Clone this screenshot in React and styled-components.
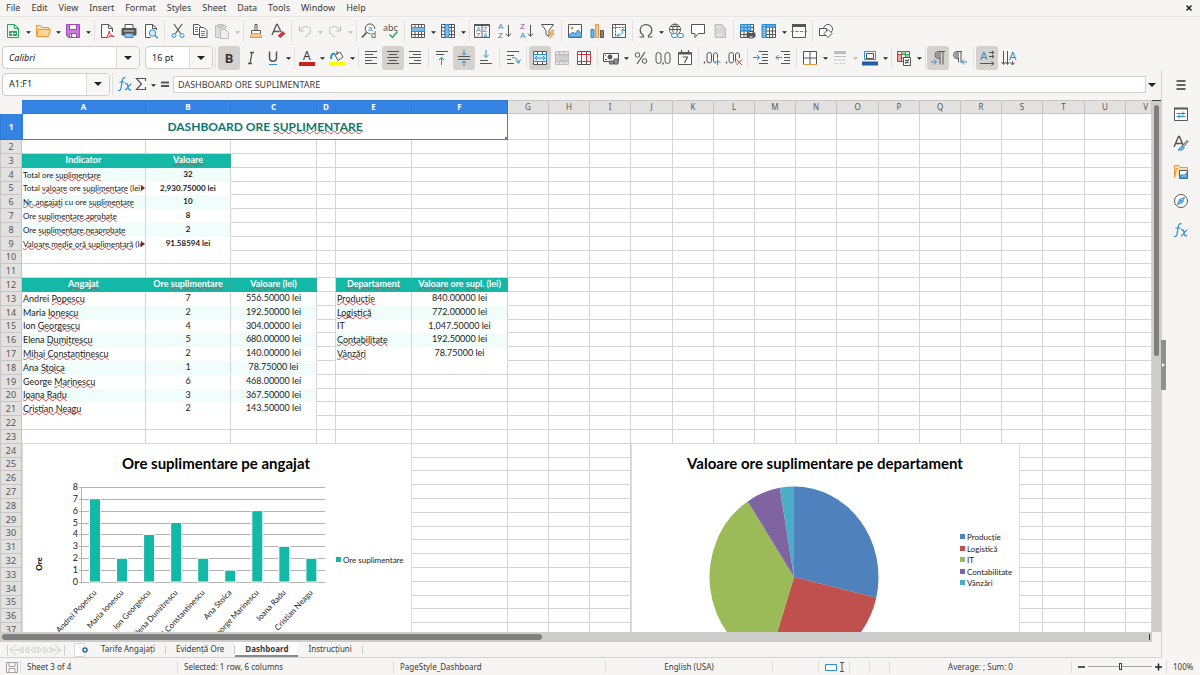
import React from "react";
import styled, { createGlobalStyle, css } from "styled-components";

const UI = '"Noto Sans", "Open Sans", sans-serif';
const SHEET = 'Lato, "Noto Sans", sans-serif';

const K = "#565656";
const B = "#2a8fd4";
const G = "#2fa35a";
const P = "#a347ba";
const R = "#d8343c";
const O = "#e8973a";
const D = "#bdbdbd";

const Global = createGlobalStyle`
  *, *::before, *::after { box-sizing: border-box; }
  html, body, #root { height: 100%; }
  body { margin: 0; background: #f6f5f3; color: #3a3a3a; font: 9px/12px ${UI}; overflow: hidden; }
  button, input, select { font: inherit; color: inherit; margin: 0; }
  svg { overflow: visible; }
`;

/* ---------- shell ---------- */

const App_ = styled.div`
  display: flex;
  flex-direction: column;
  height: 100vh;
  background: #f6f5f3;
`;

const MenuBar = styled.nav`
  display: flex;
  align-items: center;
  gap: 11px;
  height: 17px;
  padding: 0 6px;
  border-bottom: 1px solid #e6e5e3;
`;

const MenuItem = styled.button`
  padding: 0;
  border: 0;
  background: none;
  line-height: 16px;
`;

const CloseButton = styled(MenuItem)`
  display: flex;
  margin-left: auto;
`;

const Toolbar = styled.div`
  display: flex;
  align-items: center;
  height: ${(p) => p.$h}px;
  padding-left: ${(p) => p.$pad}px;
`;

const Sep = styled.span`
  flex: none;
  width: ${(p) => (p.$tight ? 4 : 5)}px;
  height: 22px;
  background: linear-gradient(#e3e1df, #e3e1df) center / 1px 100% no-repeat;
`;

const ToolButton = styled.button`
  display: flex;
  flex: none;
  align-items: center;
  justify-content: center;
  width: 22px;
  height: 24px;
  padding: 0;
  border: 0;
  border-radius: 3px;
  background: ${(p) => (p.$on ? "#d5d1cd" : "none")};
`;

const Split = styled.span`
  display: flex;
  flex: none;
  align-items: center;
`;

const DropButton = styled.button`
  display: flex;
  align-items: center;
  justify-content: center;
  width: 8px;
  height: 24px;
  padding: 2px 0 0;
  border: 0;
  background: none;
`;

const Combo = styled.span`
  display: inline-grid;
  flex: none;
  width: ${(p) => p.$w}px;
  height: 23px;
  border: 1px solid #cfccc9;
  border-radius: 4px;
  background: #fff;
  overflow: hidden;
`;

const ComboField = styled.select`
  grid-area: 1 / 1;
  appearance: none;
  width: 100%;
  padding: 0 24px 0 6px;
  border: 0;
  background: none;
  color: #222;
  font-style: ${(p) => (p.$italic ? "italic" : "normal")};
`;

const ComboArrow = styled.span`
  grid-area: 1 / 1;
  justify-self: end;
  display: flex;
  align-items: center;
  justify-content: center;
  width: 23px;
  border-left: 1px solid #dedbd8;
  background: #f8f7f6;
  pointer-events: none;
`;

const Gap = styled.span`
  flex: none;
  width: ${(p) => p.$w}px;
`;

const Body = styled.div`
  display: flex;
  flex: 1 1 0;
  min-height: 0;
`;

const Main = styled.main`
  display: flex;
  flex: 1 1 0;
  flex-direction: column;
  min-width: 0;
`;

const FormulaBar = styled.div`
  display: flex;
  align-items: center;
  height: 30px;
  padding: 0 5px 2px 2px;
`;

const FormulaInput = styled.input`
  flex: 1 1 0;
  min-width: 0;
  height: 17px;
  margin-right: 2px;
  padding: 0 4px;
  border: 1px solid #d4d2d0;
  background: #fff;
`;

const GridRow = styled.div`
  display: flex;
  flex: 1 1 0;
  min-height: 0;
`;

const SheetView = styled.div`
  position: relative;
  flex: 1 1 0;
  min-width: 0;
  overflow: hidden;
  background: #fff;
  font-family: ${SHEET};
`;

const VTrack = styled.div`
  flex: none;
  width: 9px;
  padding: 4px 2px;
  border-top: 1px solid #444;
  background: #cdcdcb;
`;

const VThumb = styled.div`
  height: 48%;
  border-radius: 3px;
  background: #7f7f7e;
`;

const HTrack = styled.div`
  display: flex;
  flex: none;
  align-items: center;
  justify-content: space-between;
  height: 10px;
  margin-right: 9px;
  padding: 2px;
  background: #cdcdcb;
`;

const HThumb = styled.div`
  width: 47%;
  height: 6px;
  border-radius: 3px;
  background: #7f7f7e;
`;

const HEnd = styled.div`
  width: 1px;
  height: 6px;
  background: #333;
`;

/* ---------- sheet ---------- */

const Grid = styled.table`
  width: 100%;
  table-layout: fixed;
  border-collapse: separate;
  border-spacing: 0;
  line-height: 12px;
`;

const Row = styled.tr`
  height: ${(p) => p.$h}px;
`;

const ColHead = styled.th`
  height: 14px;
  padding: ${(p) => (p.$last ? "0 3px 0 0" : "0")};
  border: solid ${(p) => (p.$on ? "#3079d6" : "#c6c5c3")};
  border-width: 1px 1px 1px 0;
  background: ${(p) => (p.$on ? "#3584e4" : "#e2e1df")};
  color: ${(p) => (p.$on ? "#fff" : "#555")};
  font: ${(p) => (p.$on ? 700 : 400)} 8px/12px ${UI};
  text-align: ${(p) => (p.$last ? "right" : "center")};
`;

const Corner = styled.td`
  padding: 0;
  background: #f6f5f3;
`;

const RowHead = styled.th`
  padding: 0;
  border: solid ${(p) => (p.$on ? "#3079d6" : "#c6c5c3")};
  border-width: 0 1px 1px;
  background: ${(p) => (p.$on ? "#3584e4" : "#e2e1df")};
  color: ${(p) => (p.$on ? "#fff" : "#555")};
  font: ${(p) => (p.$on ? 700 : 400)} 9px/12px ${UI};
`;

const Cell = styled.td`
  position: relative;
  padding: 0;
  border: solid #d4d4d4;
  border-width: 0 1px 1px 0;
  overflow: hidden;
  white-space: nowrap;
  color: #1c1c1c;
  font-size: ${(p) => (p.$small ? 8 : 9)}px;
  ${(p) =>
    p.$kind === "head" &&
    css`
      border-color: #35a99c;
      background: #14b8a6;
      color: #fff;
      font-weight: 700;
      text-align: center;
      vertical-align: top;
    `}
  ${(p) =>
    p.$kind === "label" &&
    css`
      padding-left: 1px;
      vertical-align: bottom;
    `}
  ${(p) =>
    p.$kind === "value" &&
    css`
      font-weight: ${p.$small ? 700 : 400};
      text-align: center;
      vertical-align: top;
    `}
  ${(p) => p.$kind && p.$kind !== "head" && `border-bottom-color: ${p.$band ? "#f0fdfa" : "#fff"};`}
  ${(p) => p.$band && "background: #f0fdfa;"}
`;

const TitleCell = styled.td`
  position: relative;
  padding: 0;
  border: 1px solid #3584e4;
  border-top: 0;
  color: #0f766e;
  font-size: 12px;
  font-weight: 700;
  line-height: 20px;
  text-align: center;
`;

const FillHandle = styled.span`
  position: absolute;
  right: -1px;
  bottom: -1px;
  width: 3px;
  height: 3px;
  background: #3584e4;
`;

const Misspelled = styled.span`
  text-decoration: underline wavy #e23b3b 1px;
  text-decoration-skip-ink: none;
  text-underline-offset: -1px;
`;

const MoreMark = styled.span`
  position: absolute;
  right: 0;
  top: 0;
  display: flex;
  align-items: center;
  height: 100%;
  background: #fff;
  &::after {
    content: "";
    border: solid transparent;
    border-width: 3px 0 3px 4px;
    border-left-color: #8a1822;
  }
`;

const ChartFrame = styled.figure`
  position: absolute;
  top: 343px;
  left: ${(p) => p.$x}px;
  margin: 0;
  border: 1px solid #dcdcdc;
  background: #fff;
`;

const ChartSvg = styled.svg`
  display: block;
  font-family: ${SHEET};
`;

/* ---------- side bar, tabs, status ---------- */

const SideBar = styled.aside`
  position: relative;
  display: flex;
  flex: none;
  flex-direction: column;
  align-items: center;
  gap: 5px;
  width: 39px;
  padding-top: 3px;
  border-left: 1px solid #d3d1cf;
`;

const SideHandle = styled.button`
  position: absolute;
  left: -1px;
  top: 46%;
  display: flex;
  align-items: center;
  width: 5px;
  height: 50px;
  padding: 0;
  border: 0;
  background: #8f8f8e;
`;

const TabBar = styled.div`
  display: flex;
  flex: none;
  align-items: center;
  height: 16px;
  padding-left: 5px;
  border-bottom: 1px solid #d3d1cf;
  font-size: 8px;
`;

const Tab = styled.button`
  height: 15px;
  padding: 0 10px;
  border: 0;
  border-bottom: 2px solid ${(p) => (p.$on ? "#8b8b8a" : "transparent")};
  background: ${(p) => (p.$on ? "#fff" : "none")};
  font-weight: ${(p) => (p.$on ? 700 : 400)};
  line-height: 13px;
`;

const TabSep = styled.span`
  width: 1px;
  height: 8px;
  background: #c9c7c5;
`;

const NavButton = styled.button`
  display: flex;
  flex: none;
  padding: 0;
  border: 0;
  background: none;
`;

const StatusBar = styled.footer`
  display: grid;
  flex: none;
  grid-template-columns: 21px 157px 216fr 212fr 167fr 46px 31px 20px 20px 182fr 95px 33px;
  align-items: center;
  height: 17px;
  font-size: 8px;
`;

const StatusItem = styled.span`
  display: flex;
  align-items: center;
  justify-content: ${(p) => (p.$center ? "center" : "flex-start")};
  height: 12px;
  padding-left: ${(p) => (p.$center ? 0 : 6)}px;
  border-right: ${(p) => (p.$plain ? 0 : 1)}px solid #e0dedc;
  white-space: nowrap;
`;

const ZoomSlider = styled.input`
  appearance: none;
  width: 64px;
  height: 9px;
  margin: 0 3px;
  background: linear-gradient(#a5a4a3, #a5a4a3) center / 100% 1px no-repeat;
  &::-webkit-slider-thumb {
    appearance: none;
    width: 3px;
    height: 7px;
    border: 1px solid #444;
    background: #f6f5f3;
  }
`;

/* ---------- icons ---------- */

const Svg = ({ children, w = 16, h = 16 }) => (
  <svg width={w} height={h} viewBox={`0 0 ${w} ${h}`} fill="none" stroke={K} strokeWidth="1" aria-hidden="true">
    {children}
  </svg>
);

const Arrow = ({ big, dim }) => (
  <svg width={big ? 8 : 5} height={big ? 4 : 3} viewBox="0 0 8 4" aria-hidden="true">
    <path d="M0 0h8L4 4z" fill={dim ? "#b9b9b9" : "#222"} />
  </svg>
);

const glyph = (text, x, y, size, fill, extra = {}) => (
  <text x={x} y={y} fontSize={size} fill={fill} stroke="none" fontFamily="Liberation Sans, sans-serif" {...extra}>
    {text}
  </text>
);

const lines = (ys, x1, x2) => ys.map((y, i) => <path key={y} d={`M${Array.isArray(x1) ? x1[i] : x1} ${y}H${Array.isArray(x2) ? x2[i] : x2}`} />);

const gridPath = "M1.5 1.5h13v13h-13zM1.5 4.5h13M1.5 8h13M1.5 11.5h13M5 1.5v13M8.5 1.5v13M11.5 1.5v13";

const ICONS = {
  new: (
    <Svg>
      <path d="M2.5 1.5h7l4 4v9h-11z" fill="#e9f7ee" stroke={G} />
      <path d="M9.5 1.5v4h4" stroke={G} />
      <path d="M4.500 8.500h7v4h-7z" fill={G} stroke={G} />
      <path d="M5 10.500h6M7.500 9v4" stroke="#d8f1e0" />
    </Svg>
  ),
  open: (
    <Svg>
      <path d="M1.500 13.500v-11h4l1.500 2h6.500v2" fill="#fbe0b4" stroke={O} />
      <path d="M1.500 13.500l2-7h12l-2 7z" fill="#fbd596" stroke={O} />
    </Svg>
  ),
  save: (
    <Svg>
      <path d="M1.500 1.500h13v13h-11l-2-2z" fill="#c77ad8" stroke={P} />
      <path d="M4.500 1.500h7v5h-7z" fill="#fff" stroke={P} />
      <path d="M4.500 14.500v-4h7v4z" fill="#fff" stroke={P} />
      <path d="M6.500 11v3" stroke={P} strokeWidth="1.500" />
    </Svg>
  ),
  pdf: (
    <Svg>
      <path d="M13.500 9V5l-4-3.500h-7v13h6M9.500 1.500v4h4" fill="#fff" />
      <path d="M10 8c0 3-1.500 5-3 7M10 8c.5 3 2 5 5 5.500-3-.8-5-.2-7.500 1.200" stroke={R} />
    </Svg>
  ),
  print: (
    <Svg>
      <path d="M4 1.500h8v4h-8z" fill="#fff" />
      <path d="M1 5.500h14v6.500H1z" fill={K} />
      <path d="M3 8h10" stroke="#ddd" />
      <path d="M4 10.500h8v4h-8z" fill="#8fc6ec" stroke={B} />
    </Svg>
  ),
  preview: (
    <Svg>
      <path d="M13.500 7V5l-4-3.500h-7v13h5M9.500 1.500v4h4" fill="#fff" />
      <circle cx="9.500" cy="10" r="3.200" fill="#d3eafa" stroke={B} />
      <path d="M11.800 12.300l3 3" stroke={B} strokeWidth="1.300" />
    </Svg>
  ),
  cut: (
    <Svg>
      <path d="M4 1l6.500 9.500M12 1L5.500 10.500" strokeWidth="1.200" />
      <circle cx="4" cy="12.500" r="2" stroke={B} />
      <circle cx="12" cy="12.500" r="2" stroke={B} />
    </Svg>
  ),
  copy: (
    <Svg>
      <path d="M8 11.500H1.500v-10h5l3 3" fill="#fff" />
      <path d="M7.500 4.500h4.500l3 3v7H7.500z" fill="#fff" />
      <path d="M3 4.500h3M3 6.500h3M3 8.500h3M9 8.500h4M9 10.500h4M9 12.500h4" stroke={B} />
    </Svg>
  ),
  paste: (
    <Svg>
      <path d="M1.500 2.500h10v12h-10z" fill="#dedede" stroke={D} />
      <path d="M4 1.500h5v3H4z" fill="#ccc" stroke={D} />
      <path d="M6.500 6.500h5l3 3v6h-8z" fill="#eee" stroke={D} />
    </Svg>
  ),
  clone: (
    <Svg>
      <path d="M7 1.500h2v6H7z" fill="#fff" />
      <path d="M3.500 7.500h9v3h-9z" fill="#fff" />
      <path d="M3.500 10.500h9l1 4h-11z" fill="#f9c98a" stroke={O} />
    </Svg>
  ),
  clear: (
    <Svg>
      <path d="M2 12L6.500 1.500h1L11 9M3.500 8.500h6" strokeWidth="1.300" />
      <path d="M7.500 13l5-5 3 2.500-5 4.500z" fill={R} stroke="none" />
    </Svg>
  ),
  undo: (
    <Svg>
      <path d="M2.500 3v5h5M2.500 8C5 4 9 2.500 12 4.500s2 6-4 10" stroke={D} />
    </Svg>
  ),
  redo: (
    <Svg>
      <path d="M13.500 3v5h-5M13.500 8C11 4 7 2.500 4 4.500s-2 6 4 10" stroke={D} />
    </Svg>
  ),
  find: (
    <Svg>
      <path d="M9.500 10.500A4.800 4.800 0 1 1 13.800 6" fill="#fff" />
      <path d="M5.500 9.500L1 14.500" strokeWidth="1.800" />
      {glyph("a", 7, 8, 8, B)}
      {glyph("d", 10, 15, 9, K)}
    </Svg>
  ),
  spell: (
    <Svg>
      {glyph("abc", 0, 8, 9, K, { fontFamily: "Noto Sans" })}
      <path d="M6.500 11.500l3 3 5-6" stroke={G} strokeWidth="1.500" />
    </Svg>
  ),
  row: (
    <Svg>
      <path d={gridPath} fill="#fff" />
      <path d="M1.500 4.500h13v4h-13z" fill="#7db9e6" stroke={B} />
    </Svg>
  ),
  column: (
    <Svg>
      <path d={gridPath} fill="#fff" />
      <path d="M5 1.500h4v13H5z" fill="#7db9e6" stroke={B} />
    </Svg>
  ),
  sort: (
    <Svg>
      <path d="M.5 1.500h15v13H.5z" fill="#fff" />
      <path d="M.5 2h15" strokeWidth="2" />
      <path d="M8 2v13" />
      {glyph("A", 2, 9, 7, B)}
      {glyph("Z", 2, 15, 7, P)}
      {glyph("Z", 9, 9, 7, P)}
      {glyph("A", 9, 15, 7, B)}
    </Svg>
  ),
  sortAsc: (
    <Svg>
      {glyph("A", 2, 6, 8, B)}
      {glyph("Z", 2, 15, 8, P)}
      <path d="M12.500 2v11M10 10.500l2.500 3 2.500-3" />
    </Svg>
  ),
  sortDesc: (
    <Svg>
      {glyph("Z", 2, 6, 8, P)}
      {glyph("A", 2, 15, 8, B)}
      <path d="M12.500 2v11M10 10.500l2.500 3 2.500-3" />
    </Svg>
  ),
  filter: (
    <Svg>
      <path d="M1.500 1.500h12l-4.500 6v6l-3-2v-4z" fill="#fff" />
      <path d="M12 7l-3 4.500h2.500L10 15.500l4.500-5H12L14 7z" fill="#f7b765" stroke={O} strokeWidth=".6" />
    </Svg>
  ),
  image: (
    <Svg>
      <path d="M1.500 1.500h13v13h-13z" fill="#fff" />
      <circle cx="5" cy="5" r="1.500" fill={O} stroke="none" />
      <path d="M2 14v-2l4-3 2 2 3-4 3.500 4v3z" fill="#6fb2e4" stroke={B} />
    </Svg>
  ),
  chart: (
    <Svg>
      <path d="M2 6.500h3v8H2z" fill="#6fb2e4" stroke={B} />
      <path d="M6.500 1.500h3v13h-3z" fill="#fbc886" stroke={O} />
      <path d="M11.500 7.500h3v7h-3z" fill="#888" />
    </Svg>
  ),
  pivot: (
    <Svg>
      <path d="M1.500 1.500h13v13h-13z" fill="#fff" />
      <path d="M1.500 4.500h13M4.500 1.500v13" strokeDasharray="2 1" />
      <path d="M6 12.500c4 0 6-2 6-6M10 8l2-2 2 2M8 10.500l-2 2 2 2" stroke={B} />
    </Svg>
  ),
  omega: (
    <Svg>
      <path d="M1.500 14h4v-1.500C3 11 2.200 9 2.200 7 2.200 4 4.500 1.700 8 1.700S13.800 4 13.800 7c0 2-.8 4-3.300 5.500V14h4" strokeWidth="1.200" />
    </Svg>
  ),
  link: (
    <Svg>
      <circle cx="7" cy="6.500" r="5.500" fill="#fff" />
      <path d="M1.500 6.500h11M7 1c-3 3-3 8 0 11M7 1c3 3 3 8 0 11M2.500 3.500h9" />
      <rect x="3.500" y="10.500" width="6" height="4" rx="2" fill="#f6f5f3" stroke={B} />
      <rect x="9.500" y="10.500" width="6" height="4" rx="2" fill="#f6f5f3" stroke={B} />
    </Svg>
  ),
  comment: (
    <Svg>
      <path d="M1.500 1.500h13v9H8.500l-3.500 4v-4H1.500z" fill="#fff" />
    </Svg>
  ),
  headerFooter: (
    <Svg>
      <path d="M3 1.500h7l3.500 3.500v9.500H3z" fill="#d6d6d6" stroke={D} />
      <path d="M5 4h4M5 12h6" stroke="#efefef" />
    </Svg>
  ),
  printArea: (
    <Svg>
      <path d={gridPath} fill="#fff" />
      <path d="M1.500 1.500h10v6h-10z" fill="#7db9e6" stroke={B} />
      <path d="M1.500 4.500h10M5 1.500v6M8.500 1.500v6" stroke={B} />
      <path d="M8 10h8v4H8z" fill={K} />
      <path d="M10 8.500h4v2h-4zM10 13h4v2h-4z" fill="#fff" />
    </Svg>
  ),
  freeze: (
    <Svg>
      <path d={gridPath} fill="#fff" />
      <path d="M1 1.500h4v13H1zM5 1.500h9.500v3H5z" fill="#56a5de" stroke={B} />
      <path d="M3 0v3M3 5v10" stroke="#fff" strokeDasharray="1 1" />
    </Svg>
  ),
  splitWin: (
    <Svg>
      <path d="M1.500 1.500h13v13h-13z" fill="#fff" />
      <path d="M1 2.500h14" strokeWidth="3" />
      <path d="M0 8.500h16" stroke={B} strokeDasharray="3 1.500" />
    </Svg>
  ),
  shapes: (
    <Svg>
      <circle cx="10" cy="6" r="4.500" fill="#fff" />
      <path d="M1.500 5.500h7v7h-7z" fill="#fff" />
      <path d="M10 6.500l4 4-4 4-4-4z" fill="#fff" />
    </Svg>
  ),
  bold: <Svg>{glyph("B", 4, 13, 13, "#333", { fontWeight: 700, fontFamily: "Roboto" })}</Svg>,
  italic: <Svg><path d="M7 2.500h4M5 13.500h4M9 2.500l-2 11" strokeWidth="1.300" /></Svg>,
  underline: (
    <Svg>
      <path d="M4.500 1.500v6c0 5 7 5 7 0v-6" strokeWidth="1.500" />
      <path d="M4 14.500h8" stroke={B} />
    </Svg>
  ),
  fontColor: (
    <Svg>
      {glyph("A", 4, 10, 12, "#333", { fontFamily: "Noto Sans" })}
      <path d="M0 14h16" stroke="#c9211e" strokeWidth="4" />
    </Svg>
  ),
  highlight: (
    <Svg>
      <path d="M6 5l5-3 3 5-5 3.500z" fill="#fff" />
      <path d="M6 4c-3-1-4 1-4 5" stroke={B} strokeWidth="2" />
      <path d="M8 5V1" />
      <path d="M0 14h16" stroke="#ffff00" strokeWidth="4" />
    </Svg>
  ),
  left: <Svg>{lines([1.5, 4.5, 7.5, 10.5, 13.5], 2, [14, 10, 14, 9, 14])}</Svg>,
  center: <Svg>{lines([1.5, 4.5, 7.5, 10.5, 13.5], [2, 4, 2, 4, 2], [14, 12, 14, 12, 14])}</Svg>,
  right: <Svg>{lines([1.5, 4.5, 7.5, 10.5, 13.5], [2, 6, 2, 7, 2], 14)}</Svg>,
  top: (
    <Svg>
      {lines([1.5, 4.5], [2, 2], [14, 10])}
      <path d="M7.500 15V8M5 10l2.500-2.500L10 10" stroke={B} />
    </Svg>
  ),
  middle: (
    <Svg>
      {lines([6.500, 9.500], [2, 2], [14, 14])}
      <path d="M8 0v5M6 3l2 2 2-2M8 16v-5M6 13l2-2 2 2" stroke={B} />
    </Svg>
  ),
  bottom: (
    <Svg>
      {lines([10.500, 13.500], [2, 2], [10, 14])}
      <path d="M8 0v7M5.500 5L8 7.500 10.500 5" stroke={B} />
    </Svg>
  ),
  wrap: (
    <Svg>
      {lines([1.500, 5.500, 9.500, 13.500], 2, [14, 9, 6, 9])}
      <path d="M7 7.500c4 0 6 1.500 6.500 5M10.500 10.500l3 3 2-4" stroke={B} />
    </Svg>
  ),
  merge: (
    <Svg>
      <path d="M1.500 1.500h13v13h-13zM1.500 4.500h13M1.500 11.500h13M5.500 1.500v3M10.500 1.500v3M5.500 11.500v3M10.500 11.500v3" fill="#fff" />
      <path d="M1.500 4.500h13v7h-13z" fill="#d3eafa" stroke={B} />
      <path d="M3 8h10M5 6L3 8l2 2M11 6l2 2-2 2" stroke={B} />
    </Svg>
  ),
  mergeCells: (
    <Svg>
      <path d="M1.500 1.500h13v13h-13zM1.500 4.500h13M1.500 11.500h13M5.500 1.500v3M10.500 1.500v3M5.500 11.500v3M10.500 11.500v3" fill="#e4e4e4" stroke={D} />
      <path d="M1.500 5h13v6h-13z" fill="#d0d0d0" stroke={D} />
    </Svg>
  ),
  splitCells: (
    <Svg>
      <path d="M1.500 1.500h13v13h-13zM1.500 4.500h13M1.500 11.500h13M5.500 1.500v3M10.500 1.500v3M5.500 11.500v3M10.500 11.500v3" fill="#fff" />
      <path d="M1.500 4.500h13v7h-13zM5.500 4.500v7M10.500 4.500v7" stroke={R} fill="#fff" />
    </Svg>
  ),
  currency: (
    <Svg>
      <path d="M.5 3.500h15v8H.5z" fill="#fff" />
      <circle cx="7" cy="7" r="2" fill={K} />
      <path d="M2 5.500h1M2 9.500h2" />
      <path d="M6.500 11h4v3h-4zM11 9h4v5h-4z" fill="#999" />
    </Svg>
  ),
  percent: (
    <Svg>
      <circle cx="4.500" cy="5" r="2.300" />
      <circle cx="11.500" cy="11" r="2.300" />
      <path d="M12 2L4 14" strokeWidth="1.200" />
    </Svg>
  ),
  number: (
    <Svg>
      <rect x="1" y="2.500" width="5" height="11" rx="2.500" />
      <rect x="10" y="2.500" width="5" height="11" rx="2.500" />
      <path d="M8 12.500v2" strokeWidth="1.500" />
    </Svg>
  ),
  date: (
    <Svg>
      <path d="M1.500 2.500h13v12h-13z" fill="#fff" />
      <path d="M1.500 3.500h13" strokeWidth="2" />
      <path d="M4.500 0v3M11.500 0v3M5.500 7h5l-3 6" strokeWidth="1.200" />
    </Svg>
  ),
  addDec: (
    <Svg w={18}>
      <path d="M1.500 11.500v2" strokeWidth="1.400" />
      <rect x="4" y="2.500" width="4.500" height="10.500" rx="2.200" />
      <path d="M14.500 8V5c0-3-4-3-4 0v5c0 2 .5 3 2 3" />
      <path d="M14.500 9v6M11.500 12h6" stroke={B} />
    </Svg>
  ),
  delDec: (
    <Svg w={18}>
      <path d="M1.500 11.500v2" strokeWidth="1.400" />
      <rect x="4" y="2.500" width="4.500" height="10.500" rx="2.200" />
      <path d="M14.500 8V5c0-3-4-3-4 0v5c0 2 .5 3 1 3" />
      <path d="M11.500 9.500l5.500 5.500M17 9.500L11.500 15" stroke={R} />
    </Svg>
  ),
  indent: (
    <Svg>
      {lines([1.5, 4.5, 7.5, 10.5, 13.5], [6, 9, 9, 9, 6], 15)}
      <path d="M0 7.500h6M4 5l2.500 2.500L4 10" stroke={B} />
    </Svg>
  ),
  outdent: (
    <Svg>
      {lines([1.5, 4.5, 7.5, 10.5, 13.5], [6, 9, 9, 9, 6], 15)}
      <path d="M1 7.500h6M3.500 5L1 7.500 3.500 10" stroke={B} />
    </Svg>
  ),
  borders: (
    <Svg>
      <path d="M1.500 14V1.500h13V14M8 1.500V14M1.500 8h13" fill="#fff" />
      <path d="M1 14.500h14" stroke={O} />
    </Svg>
  ),
  borderStyle: (
    <Svg>
      <path d="M2 2.500h12" stroke={D} strokeWidth="3" />
      <path d="M2 6.500h12" stroke={D} />
      <path d="M2 10h12" stroke={D} strokeDasharray="3 1" />
      <path d="M2 13.500h12" stroke={D} strokeDasharray="1 1" />
    </Svg>
  ),
  borderColor: (
    <Svg>
      <path d="M2.500 1.500h11v8h-11z" fill="#fff" stroke={B} />
      <path d="M4.500 3.500h7v5h-7z" fill="#f6f5f3" />
      <path d="M0 13.500h16" stroke="#1f5fa6" strokeWidth="4" />
    </Svg>
  ),
  conditional: (
    <Svg>
      <path d="M1.500 1.500h12v10h-12zM1.500 4.500h12M1.500 8h12M5.500 1.500v10M9.500 1.500v10" fill="#fff" />
      <path d="M5.500 1.500h4v3h-4zM9.500 4.500h4v3h-4z" fill="#8fd3a4" stroke={G} />
      <path d="M1.500 4.500h4v7h-4z" fill="#f3a09f" stroke={R} />
      <path d="M7.500 7.500h7v8h-7z" fill="#fff" />
      <path d="M9 10.500h4M9 12.500h4M12.500 9l-3 5" />
    </Svg>
  ),
  ltr: (
    <Svg>
      <path d="M15 1.500H8.500a3.500 3.500 0 0 0 0 7H10M10 1.500v13M13 1.500v13" />
      <path d="M7 2h3v6H8C5 8 5 3 7 2z" fill="#999" stroke="none" />
      <path d="M1 12h5M4 9.500L6.500 12 4 14.500" stroke={B} />
    </Svg>
  ),
  rtl: (
    <Svg>
      <path d="M10 1.500H5a3.500 3.500 0 0 0 0 7h1.500M6.500 1.500v11M9 1.500v11" />
      <path d="M4 2h3v6H5C2 8 2 3 4 2z" fill="#999" stroke="none" />
      <path d="M15 12h-5M12 9.500L9.500 12l2.500 2.500" stroke={B} />
    </Svg>
  ),
  textH: (
    <Svg>
      {glyph("A", 1, 10, 11, B)}
      <path d="M10 2.500h5M10 6.500h5M1 13.500h14M13 1l2 1.500L13 4M13 5l2 1.500L13 8M12.500 11.500l2.500 2-2.500 2" />
    </Svg>
  ),
  textV: (
    <Svg>
      {glyph("A", 8, 10, 11, B)}
      <path d="M2.500 1v13M6.500 1v13M11.500 11v4M.5 12l2 2.500 2-2.500M4.500 12l2 2.500 2-2.500M9.500 12.500l2 2.500 2-2.500" />
    </Svg>
  ),
  menu: <Svg><path d="M3.500 4h9M3.500 8h9M3.500 12h9" stroke="#333" strokeWidth="1.500" /></Svg>,
  properties: (
    <Svg>
      <path d="M1.500 2.500h13v12h-13z" fill="#fff" />
      <path d="M1 2.500h14" strokeWidth="2" />
      <path d="M3.500 7.500h9M3.500 10.500h9M10 5.500v4M6 8.500v4" stroke={B} />
    </Svg>
  ),
  styles: (
    <Svg>
      <path d="M1 12L5.500 1.500h1L10 10M2.500 8.500h6" strokeWidth="1.500" />
      <path d="M14.500 5L9 11M15.500 6l-5.500 6" />
      <path d="M9.500 11c-2 0-2 2-4.500 4 4 .5 6-.5 6-2.500z" fill="#6fb2e4" stroke={B} />
    </Svg>
  ),
  gallery: (
    <Svg>
      <path d="M1.500 13.500v-12h4l1.500 2h7.500v3" fill="#fbe0b4" stroke={O} />
      <path d="M1.500 13.500l2-9h2" stroke={O} />
      <path d="M6.500 6.500h8v8h-8z" fill="#fff" />
      <path d="M7 14v-2l2-1.500 2 1 3-3V14z" fill="#6fb2e4" stroke={B} />
    </Svg>
  ),
  navigator: (
    <Svg>
      <circle cx="8" cy="8" r="6.500" fill="#fff" />
      <path d="M11.500 4.500L9.500 9.500l-5 2 2-5z" fill="#9fd0f1" stroke={B} />
      <circle cx="8" cy="8" r="1" fill={B} stroke="none" />
    </Svg>
  ),
  fx: (
    <Svg>
      <path d="M8.500 2c-2-1-3 1-3.300 3L4 12c-.3 2-1.500 3-3 2.200M2.500 6h5" stroke={B} strokeWidth="1.200" />
      <path d="M8 8c2-1 2.500 0 3 3s1.500 3.500 3 2.500M14.500 8c-2-.3-4.500 5.500-6.500 6" stroke={B} strokeWidth="1.200" />
    </Svg>
  ),
  sum: <Svg><path d="M12.500 5V2.500h-9L8.500 8l-5 5.500h9V11" strokeWidth="1.200" /></Svg>,
  equals: <Svg><path d="M4 6.500h8M4 10h8" strokeWidth="1.800" /></Svg>,
};

const Tool = ({ icon, label, on, drop, dim }) => {
  const button = (
    <ToolButton type="button" aria-label={label || icon} aria-pressed={on} $on={on}>
      {ICONS[icon]}
    </ToolButton>
  );
  if (!drop) return button;
  return (
    <Split>
      {button}
      <DropButton type="button" aria-label={`${label || icon} options`}>
        <Arrow dim={dim} />
      </DropButton>
    </Split>
  );
};

/* "-" is a separator, "~" a narrow one, "+" adds a drop-down, "!" dims its arrow, "*" marks a pressed button */
const renderTools = (list) =>
  list.split(" ").map((item, i) => {
    if (item === "-" || item === "~") return <Sep key={i} $tight={item === "~"} />;
    const name = item.replace(/[+*!]/g, "");
    return <Tool key={i} icon={name} on={item.includes("*") || undefined} drop={item.includes("+")} dim={item.includes("!")} />;
  });

const STANDARD =
  "new+ open+ save+ ~ pdf print preview - cut copy paste+! ~ clone clear - undo+! redo+! ~ find spell - row+ column+ ~ sort sortAsc sortDesc filter - image chart pivot - omega+ link comment headerFooter - printArea freeze+ splitWin - shapes";
const FORMATTING =
  "bold* italic underline+ ~ fontColor+ highlight+ ~ left center* right - top middle* bottom - wrap - merge* mergeCells splitCells - currency+ percent number date - addDec delDec - indent outdent - borders+ borderStyle+! borderColor+ ~ conditional+ ~ ltr* rtl - textH* textV";

const DropDown = ({ label, value, w, italic }) => (
  <Combo $w={w}>
    <ComboField aria-label={label} defaultValue={value} $italic={italic}>
      <option>{value}</option>
    </ComboField>
    <ComboArrow>
      <Arrow big />
    </ComboArrow>
  </Combo>
);

/* ---------- data ---------- */

const COLS = [
  ["A", 124], ["B", 85], ["C", 86], ["D", 19], ["E", 76], ["F", 96], ["G", 41], ["H", 41], ["I", 41],
  ["J", 42], ["K", 41], ["L", 41], ["M", 41], ["N", 41], ["O", 42], ["P", 41], ["Q", 41], ["R", 41],
  ["S", 41], ["T", 42], ["U", 41], ["V", null],
];

/* misspelled runs are enclosed in bars */
const INDICATORS = [
  ["Total ore |suplimentare|", "32"],
  ["Total |valoare| ore |suplimentare| (lei)", "2,930.75000 lei"],
  ["|Nr. angajați| cu ore |suplimentare|", "10"],
  ["Ore |suplimentare aprobate|", "8"],
  ["Ore |suplimentare neaprobate|", "2"],
  ["|Valoare medie oră suplimentară| (lei)", "91.58594 lei"],
];

const EMPLOYEES = [
  ["Andrei |Popescu|", 7, "556.50000 lei"],
  ["Maria |Ionescu|", 2, "192.50000 lei"],
  ["Ion |Georgescu|", 4, "304.00000 lei"],
  ["Elena |Dumitrescu|", 5, "680.00000 lei"],
  ["|Mihai Constantinescu|", 2, "140.00000 lei"],
  ["Ana |Stoica|", 1, "78.75000 lei"],
  ["George |Marinescu|", 6, "468.00000 lei"],
  ["|Ioana Radu|", 3, "367.50000 lei"],
  ["|Cristian Neagu|", 2, "143.50000 lei"],
];

const DEPARTMENTS = [
  ["|Producție|", "840.00000 lei", 840, "#4f81bd"],
  ["|Logistică|", "772.00000 lei", 772, "#c0504d"],
  ["IT", "1,047.50000 lei", 1047.5, "#9bbb59"],
  ["|Contabilitate|", "192.50000 lei", 192.5, "#8064a2"],
  ["|Vânzări|", "78.75000 lei", 78.75, "#4bacc6"],
];

const plain = (s) => s.replace(/\|/g, "");

const Spelled = ({ text }) =>
  String(text)
    .split("|")
    .map((part, i) => (i % 2 ? <Misspelled key={i}>{part}</Misspelled> : part));

function cellAt(row, col) {
  if (row === 3 && col < 2) return { kind: "head", text: ["Indicator", "|Valoare|"][col] };
  if (row >= 4 && row <= 9 && col < 2)
    return {
      kind: col ? "value" : "label",
      text: INDICATORS[row - 4][col],
      small: true,
      band: row % 2 === 0,
      more: !col && (row === 5 || row === 9),
    };
  if (row === 12) {
    const text = ["|Angajat|", "Ore |suplimentare|", "|Valoare| (lei)", null, "|Departament|", "|Valoare| ore |supl.| (lei)"][col];
    if (text) return { kind: "head", text };
  }
  if (row >= 13 && row <= 21 && col < 3)
    return { kind: col ? "value" : "label", text: EMPLOYEES[row - 13][col], band: row % 2 === 0 };
  if (row >= 13 && row <= 17 && (col === 4 || col === 5))
    return { kind: col === 5 ? "value" : "label", text: DEPARTMENTS[row - 13][col - 4], band: row % 2 === 0 };
  return {};
}

const ROWS = Array.from({ length: 36 }, (_, i) => i + 2);

const Sheet = () => (
  <Grid>
    <colgroup>
      <col style={{ width: 22 }} />
      {COLS.map(([name, w]) => (
        <col key={name} style={w ? { width: w } : undefined} />
      ))}
    </colgroup>
    <thead>
      <tr>
        <Corner />
        {COLS.map(([name, w], i) => (
          <ColHead key={name} scope="col" $on={i < 6} $last={!w}>
            {name}
          </ColHead>
        ))}
      </tr>
    </thead>
    <tbody>
      <Row $h={26}>
        <RowHead scope="row" $on>1</RowHead>
        <TitleCell colSpan={6}>
          DASHBOARD ORE <Misspelled>SUPLIMENTARE</Misspelled>
          <FillHandle />
        </TitleCell>
        {COLS.slice(6).map(([name]) => (
          <Cell key={name} />
        ))}
      </Row>
      {ROWS.map((row) => (
        <Row key={row} $h={row % 5 === 0 ? 13 : 14}>
          <RowHead scope="row">{row}</RowHead>
          {COLS.map(([name], col) => {
            const c = cellAt(row, col);
            return (
              <Cell key={name} $kind={c.kind} $small={c.small} $band={c.band}>
                {c.text !== undefined && <Spelled text={c.text} />}
                {c.more && <MoreMark />}
              </Cell>
            );
          })}
        </Row>
      ))}
    </tbody>
  </Grid>
);

/* ---------- charts ---------- */

const BarChart = () => {
  const y = (v) => 138 - v * 11.9;
  return (
    <ChartFrame $x={22}>
      <ChartSvg width="388" height="220" viewBox="0 0 388 220" role="img" aria-label="Ore suplimentare pe angajat">
        <text x="193" y="25" textAnchor="middle" fontSize="15" fontWeight="700">
          Ore suplimentare pe angajat
        </text>
        {[0, 1, 2, 3, 4, 5, 6, 7, 8].map((v) => (
          <g key={v}>
            <path d={`M56 ${Math.round(y(v)) + 0.5}H302`} stroke="#b3b3b3" />
            <text x="55" y={Math.round(y(v)) + 3} textAnchor="end" fontSize="9" fill="#222">
              {v}
            </text>
          </g>
        ))}
        <path d="M58.500 43V138" stroke="#b3b3b3" />
        {EMPLOYEES.map(([name, hours], i) => {
          const cx = 72 + i * 27.05;
          return (
            <g key={name}>
              <rect x={cx - 5.5} y={y(hours)} width="11" height={hours * 11.9} fill="#14b8a6" stroke="#fff" />
              <text transform={`translate(${cx + 2} 149) rotate(-47)`} textAnchor="end" fontSize="8" fill="#222">
                {plain(name)}
              </text>
            </g>
          );
        })}
        <text transform="translate(19 120) rotate(-90)" textAnchor="middle" fontSize="8" fontWeight="700">
          Ore
        </text>
        <rect x="313" y="113" width="5" height="5" fill="#14b8a6" />
        <text x="320" y="119" fontSize="8" fill="#222">
          Ore suplimentare
        </text>
      </ChartSvg>
    </ChartFrame>
  );
};

const PieChart = () => {
  const total = DEPARTMENTS.reduce((s, d) => s + d[2], 0);
  const [cx, cy, rx, ry] = [162, 133, 84.5, 90.5];
  const point = (t) => `${cx + rx * Math.sin(t * 2 * Math.PI)} ${cy - ry * Math.cos(t * 2 * Math.PI)}`;
  let at = 0;
  return (
    <ChartFrame $x={631}>
      <ChartSvg width="387" height="240" viewBox="0 0 387 240" role="img" aria-label="Valoare ore suplimentare pe departament">
        <text x="193" y="25" textAnchor="middle" fontSize="15" fontWeight="700">
          Valoare ore suplimentare pe departament
        </text>
        {DEPARTMENTS.map(([name, , value, color], i) => {
          const from = at;
          at += value / total;
          return (
            <g key={name}>
              <path d={`M${cx} ${cy}L${point(from)}A${rx} ${ry} 0 0 1 ${point(at)}Z`} fill={color} />
              <rect x="328" y={90 + Math.round(i * 11.6)} width="5" height="5" fill={color} />
              <text x="335" y={96 + Math.round(i * 11.6)} fontSize="8" fill="#222">
                {plain(name)}
              </text>
            </g>
          );
        })}
      </ChartSvg>
    </ChartFrame>
  );
};

/* ---------- page ---------- */

const MENUS = ["File", "Edit", "View", "Insert", "Format", "Styles", "Sheet", "Data", "Tools", "Window", "Help"];

export default function App() {
  return (
    <App_>
      <Global />
      <MenuBar aria-label="Menu">
        {MENUS.map((m) => (
          <MenuItem key={m} type="button">{m}</MenuItem>
        ))}
        <CloseButton type="button" aria-label="Close document">
          <Svg w={10} h={8}>
            <path d="M2.500 1.500l5 5M7.500 1.500l-5 5" stroke="#222" strokeWidth="1.500" />
          </Svg>
        </CloseButton>
      </MenuBar>
      <Toolbar $h={28} $pad={2} role="toolbar" aria-label="Standard">
        {renderTools(STANDARD)}
      </Toolbar>
      <Toolbar $h={25} $pad={2} role="toolbar" aria-label="Formatting">
        <DropDown label="Font name" value="Calibri" w={138} italic />
        <Gap $w={5} />
        <DropDown label="Font size" value="16 pt" w={68} />
        <Sep />
        {renderTools(FORMATTING)}
      </Toolbar>
      <Body>
        <Main>
          <FormulaBar>
            <DropDown label="Name box" value="A1:F1" w={108} />
            <Sep />
            <Gap $w={2} />
            <NavButton type="button" aria-label="Function wizard">{ICONS.fx}</NavButton>
            <Split>
              <NavButton type="button" aria-label="Select function">{ICONS.sum}</NavButton>
              <DropButton type="button" aria-label="Select function options">
                <Arrow />
              </DropButton>
            </Split>
            <NavButton type="button" aria-label="Formula">{ICONS.equals}</NavButton>
            <FormulaInput aria-label="Formula input" defaultValue="DASHBOARD ORE SUPLIMENTARE" />
            <DropButton type="button" aria-label="Expand formula bar">
              <Arrow big />
            </DropButton>
          </FormulaBar>
          <GridRow>
            <SheetView>
              <Sheet />
              <BarChart />
              <PieChart />
            </SheetView>
            <VTrack>
              <VThumb />
            </VTrack>
          </GridRow>
          <HTrack>
            <HThumb />
            <HEnd />
          </HTrack>
          <TabBar>
            <NavButton type="button" aria-label="Scroll sheets">
              <Svg w={64} h={14}>
                <path
                  d="M2.500 2v10M11 2L5 7l6 5M7 7h7M18 4l-4 3 4 3zM24 4l-4 3 4 3zM30 4l-4 3 4 3zM33 4l4 3-4 3zM39 4l4 3-4 3zM45 4l4 3-4 3zM50 2l6 5-6 5M47 7h8M59.500 2v10"
                  stroke="#cfcdcb"
                />
              </Svg>
            </NavButton>
            <Gap $w={4} />
            <NavButton type="button" aria-label="Add sheet">
              <Svg w={18} h={14}>
                <path d="M1.500 0v13.500h10V11M1.500.5h10v3" fill="#fff" stroke="#dcdad8" />
                <circle cx="12" cy="7" r="2" fill="#fff" stroke="#2567b5" strokeWidth="1.500" />
              </Svg>
            </NavButton>
            <Tab type="button">Tarife Angajați</Tab>
            <TabSep />
            <Tab type="button">Evidență Ore</Tab>
            <TabSep />
            <Tab type="button" $on>Dashboard</Tab>
            <Tab type="button">Instrucțiuni</Tab>
            <TabSep />
          </TabBar>
        </Main>
        <SideBar aria-label="Sidebar">
          {["menu", "properties", "styles", "gallery", "navigator", "fx"].map((name) => (
            <ToolButton key={name} type="button" aria-label={name}>
              {ICONS[name]}
            </ToolButton>
          ))}
          <SideHandle type="button" aria-label="Collapse sidebar">
            <Svg w={5} h={6}>
              <path d="M1 1l3 2-3 2z" fill="#fff" stroke="none" />
            </Svg>
          </SideHandle>
        </SideBar>
      </Body>
      <StatusBar>
        <StatusItem>
          <Svg w={12} h={12}>
            <path d="M.5 1.500h11v10H.5zM3 1.500v4h6v-4M3 11.500v-4h6v4" stroke="#a3a3a3" />
          </Svg>
        </StatusItem>
        <StatusItem>Sheet 3 of 4</StatusItem>
        <StatusItem>Selected: 1 row, 6 columns</StatusItem>
        <StatusItem>PageStyle_Dashboard</StatusItem>
        <StatusItem $center>English (USA)</StatusItem>
        <StatusItem />
        <StatusItem>
          <Svg w={20} h={12}>
            <path d="M.5 3.500h11v6H.5z" stroke={B} fill="#fff" />
            <path d="M15 1.500h4M15 10.500h4M17 1.500v9" />
          </Svg>
        </StatusItem>
        <StatusItem />
        <StatusItem />
        <StatusItem $center>Average: ; Sum: 0</StatusItem>
        <StatusItem>
          <NavButton type="button" aria-label="Zoom out">
            <Svg w={7} h={8}>
              <path d="M0 4h7" stroke="#222" strokeWidth="1.500" />
            </Svg>
          </NavButton>
          <ZoomSlider type="range" aria-label="Zoom" defaultValue="50" />
          <NavButton type="button" aria-label="Zoom in">
            <Svg w={7} h={8}>
              <path d="M0 4h7M3.500.5v7" stroke="#222" strokeWidth="1.500" />
            </Svg>
          </NavButton>
        </StatusItem>
        <StatusItem $plain>100%</StatusItem>
      </StatusBar>
    </App_>
  );
}
